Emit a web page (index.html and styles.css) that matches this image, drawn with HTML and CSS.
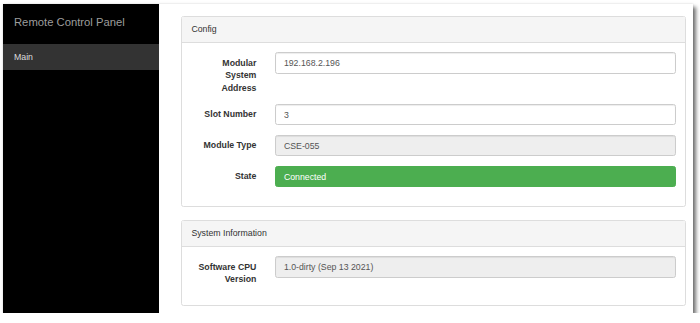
FILE: index.html
```
<!DOCTYPE html>
<html>
<head>
    <title>Remote Control Panel</title>
    <meta charset="utf-8">
    <link rel="stylesheet" href="styles.css">
</head>
<body>
    <div class="window">
        <div class="sidebar">
            <div class="brand">Remote Control Panel</div>
            <div class="navItem active">Main</div>
        </div>

        <div class="main">
            <div class="panel">
                <div class="panelHeading">Config</div>
                <div class="panelBody">
                    <div class="formRow">
                        <label>Modular System Address</label>
                        <input type="text" class="field" value="192.168.2.196">
                    </div>
                    <div class="formRow">
                        <label>Slot Number</label>
                        <input type="text" class="field" value="3">
                    </div>
                    <div class="formRow">
                        <label>Module Type</label>
                        <input type="text" class="field" value="CSE-055" disabled>
                    </div>
                    <div class="formRow">
                        <label>State</label>
                        <div class="field connected">Connected</div>
                    </div>
                </div>
            </div>

            <div class="panel">
                <div class="panelHeading">System Information</div>
                <div class="panelBody">
                    <div class="formRow">
                        <label>Software CPU Version</label>
                        <input type="text" class="field" value="1.0-dirty (Sep 13 2021)" disabled>
                    </div>
                </div>
            </div>
        </div>
    </div>
</body>
</html>
```

FILE: styles.css
```
* {
    box-sizing: border-box;
}

body {
    margin: 0;
    background-color: #fff;
    font-family: "Liberation Sans", Arial, Helvetica, sans-serif;
    font-size: 8.75px;
    line-height: 12.5px;
    color: #333;
}

.window {
    display: flex;
    width: 690px;
    height: 309px;
    margin: 4px 0 0 3px;
    background-color: #fff;
    box-shadow: 0 0 2px rgba(0, 0, 0, 0.12), 3px 3px 4px rgba(0, 0, 0, 0.55);
}

.sidebar {
    width: 156px;
    background-color: #000;
}

.brand {
    height: 40px;
    padding: 11px 11px 0 11px;
    font-size: 11.25px;
    line-height: 14px;
    color: #9d9d9d;
}

.navItem {
    height: 26px;
    padding: 7px 11px 0 11px;
    color: #ddd;
}

.active {
    background-color: #333;
}

.main {
    flex: 1;
    padding: 12px 7px 0 22px;
}

.panel {
    border: 1px solid #ddd;
    border-radius: 2.5px;
    margin-bottom: 12.5px;
    background-color: #fff;
}

.panelHeading {
    height: 26px;
    padding: 6.25px 9.4px;
    background-color: #f5f5f5;
    border-bottom: 1px solid #ddd;
    color: #333;
}

.panelBody {
    padding: 9.4px;
}

.formRow {
    display: grid;
    grid-template-columns: 65px 1fr;
    column-gap: 19px;
    padding-bottom: 9.75px;
}

.formRow label {
    padding-top: 4.4px;
    font-weight: bold;
    text-align: right;
}

.field {
    display: block;
    width: 100%;
    height: 21.25px;
    margin: 0;
    padding: 4px 7.5px;
    border: 1px solid #ccc;
    border-radius: 2.5px;
    font-family: inherit;
    font-size: 8.75px;
    line-height: 12.5px;
    color: #555;
    background-color: #fff;
    box-shadow: inset 0 1px 1px rgba(0, 0, 0, 0.075);
}

.field:disabled {
    background-color: #eee;
    color: #555;
}

.connected {
    background-color: #4cae50;
    border-color: #4cae50;
    color: #fff;
    box-shadow: none;
}
```
